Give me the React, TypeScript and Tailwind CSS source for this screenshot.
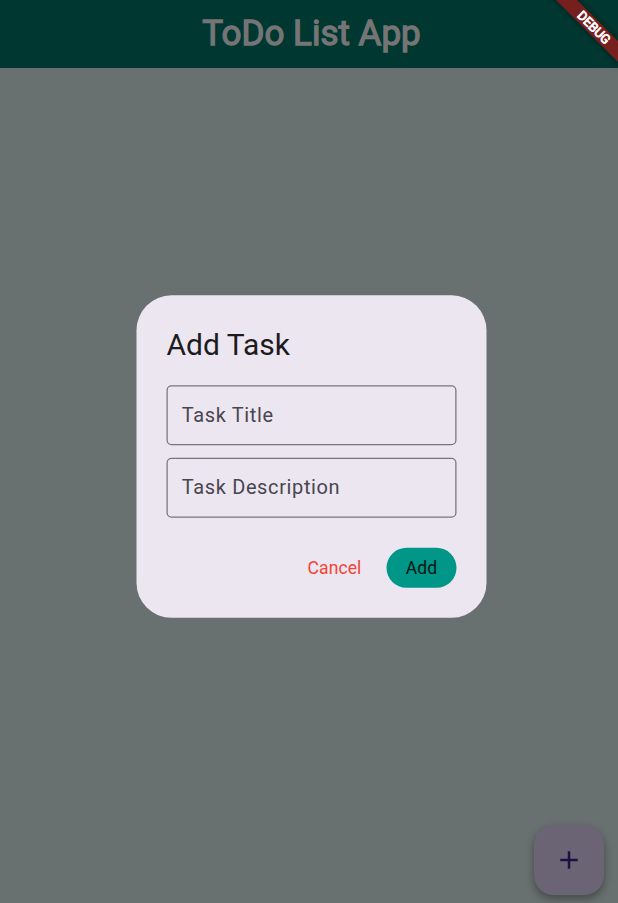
function Field({ label }: { label: string }) {
  return (
    <div className="flex h-12 items-center rounded-[4px] border border-[#79747e] px-[11.3px] text-[16px] tracking-[0.5px] text-[#49454f]">
      {label}
    </div>
  );
}

export default function App() {
  return (
    <div className="relative flex h-[903px] w-full flex-col overflow-hidden bg-[#68716f] font-['Roboto',sans-serif]">
      <header className="flex h-[68px] items-center justify-center bg-[#003831] pl-[5px]">
        <h1 className="text-[35px] leading-[68px] font-normal text-[#757575] [-webkit-text-stroke:1.3px_#757575]">
          ToDo List App
        </h1>
      </header>

      <main className="flex flex-1 pt-[227px] pl-[136px]">
        <section className="flex h-[258px] w-[280px] origin-top-left translate-x-[0.5px] translate-y-[0.3px] scale-125 flex-col rounded-[28px] bg-[#ece6f0] p-6">
          <h2 className="h-8 text-[24px] leading-8 text-[#1d1b20]">Add Task</h2>
          <div className="mt-4 flex flex-col gap-[10px]">
            <Field label="Task Title" />
            <Field label="Task Description" />
          </div>
          <div className="mt-6 flex items-center justify-end gap-5 text-[14px] tracking-[0.1px]">
            <button className="text-[#f44336]">Cancel</button>
            <button className="h-8 w-14 rounded-full bg-[#009688] text-[#001512]">Add</button>
          </div>
        </section>
      </main>

      <button
        aria-label="Add task"
        className="absolute top-[825px] left-[534px] flex size-[70px] items-center justify-center rounded-[20px] bg-[#6b6475] shadow-[0_4px_8px_2px_rgba(0,0,0,0.16),0_4px_5px_rgba(0,0,0,0.14)]"
      >
        <svg viewBox="0 0 24 24" className="size-[30px] fill-[#1e0f45]">
          <path d="M19 13h-6v6h-2v-6H5v-2h6V5h2v6h6z" />
        </svg>
      </button>

      <div className="absolute top-[20px] left-[532px] flex h-[15px] w-[124px] rotate-45 items-center justify-center bg-[#761f1f] pt-px text-[12.75px] leading-none font-normal text-white shadow-[0_0_7px_rgba(0,0,0,0.5)] [-webkit-text-stroke:0.8px_white]">
        DEBUG
      </div>
    </div>
  );
}
